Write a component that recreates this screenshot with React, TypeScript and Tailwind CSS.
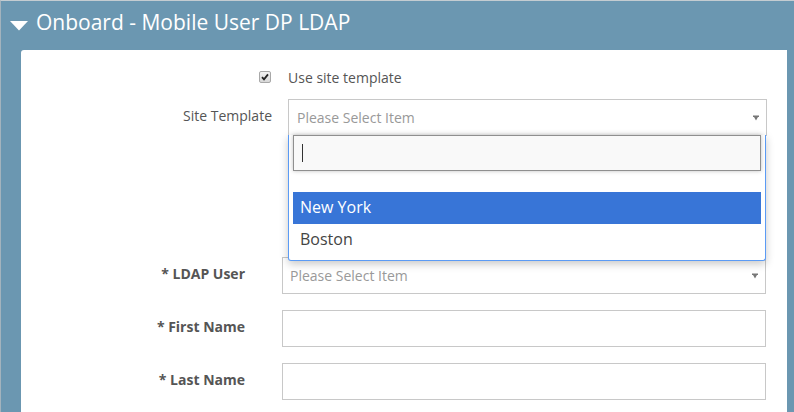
const font = { fontFamily: '"Open Sans", sans-serif' }

function Caret() {
  return (
    <svg width="6" height="6" viewBox="0 0 6 6" className="shrink-0">
      <path d="M0 0.5H6V2H5L3 5.5L1 2H0Z" fill="#777" />
    </svg>
  )
}

function SelectBox({ className }: { className: string }) {
  return (
    <div className={`flex h-[37px] items-center justify-between border border-[#c8c8c8] pr-[7px] ${className}`}>
      <span className="text-[14px] text-[#999]">Please Select Item</span>
      <Caret />
    </div>
  )
}

function Row({ label, children }: { label: string; children: React.ReactNode }) {
  return (
    <div className="flex items-center">
      <label className="w-[224px] shrink-0 pb-[4px] pr-[1px] text-right text-[14px] font-bold text-[#555]">{label}</label>
      <div className="ml-[36px] w-[484px]">{children}</div>
    </div>
  )
}

export default function App() {
  return (
    <div className="h-[412px] w-[794px] overflow-hidden border-l border-t border-l-[#a3b3bd] border-t-[#c4ccd1] bg-[#6b97b1]" style={font}>
      <div className="flex h-[49px] items-center pb-[6px] pl-[9px]">
        <svg width="18" height="10" viewBox="0 0 18 10" className="mt-[7px] shrink-0">
          <path d="M0 0H18L9 9.5Z" fill="#fff" />
        </svg>
        <h1 className="ml-2 text-[21px] leading-none text-white">Onboard - Mobile User DP LDAP</h1>
      </div>

      <div className="relative ml-[20px] mr-[7px] h-[400px] rounded-tl-[3px] bg-white pl-[1px] pt-[18px]">
        <div className="flex h-[19px] items-center">
          <div className="flex w-[249px] justify-end">
            <span className="relative -mt-[2px] flex h-[12px] w-[12px]">
              <input
                type="checkbox"
                defaultChecked
                readOnly
                className="h-[12px] w-[12px] appearance-none rounded-[2px] border border-[#a8a8a8] bg-gradient-to-b from-[#f2f2f2] to-[#d8d8d8]"
              />
              <svg width="10" height="10" viewBox="0 0 10 10" className="pointer-events-none absolute left-[1px] top-[1px]">
                <path d="M2 5.2L4 7.4L8 2.4" fill="none" stroke="#222" strokeWidth="1.8" />
              </svg>
            </span>
          </div>
          <span className="ml-[17px] text-[14px] text-[#555]">Use site template</span>
        </div>

        <div className="mt-[12px] flex items-start">
          <span className="mt-[6px] w-[250px] text-right text-[14px] text-[#555]">Site Template</span>
          <SelectBox className="ml-[16px] w-[479px] pl-2" />
        </div>

        <div className="absolute left-[267px] top-[85px] z-10 h-[126px] w-[478px] rounded-b-[3px] border border-t-0 border-[#5b9bf5] bg-white px-1 shadow-[0_3px_8px_rgba(0,0,0,0.22)]">
          <div className="flex h-[36px] items-center border border-[#8f8f8f] bg-[#f9f9f9] pl-2 shadow-[0_0_4px_rgba(0,0,0,0.25)]">
            <span className="h-[18px] w-px bg-[#333]" />
          </div>
          <div className="mt-[21px] flex h-[32px] items-center bg-[#3875d7] pb-[2px] pl-[7px] text-[16px] text-white">New York</div>
          <div className="flex h-[32px] items-center pb-[2px] pl-[7px] text-[16px] text-[#444]">Boston</div>
        </div>

        <div className="mt-[121px] flex flex-col gap-[16px]">
          <Row label="* LDAP User">
            <SelectBox className="w-full pl-[7px]" />
          </Row>
          <Row label="* First Name">
            <div className="h-[37px] border border-[#c8c8c8]" />
          </Row>
          <Row label="* Last Name">
            <div className="h-[37px] border border-[#c8c8c8]" />
          </Row>
        </div>
      </div>
    </div>
  )
}
